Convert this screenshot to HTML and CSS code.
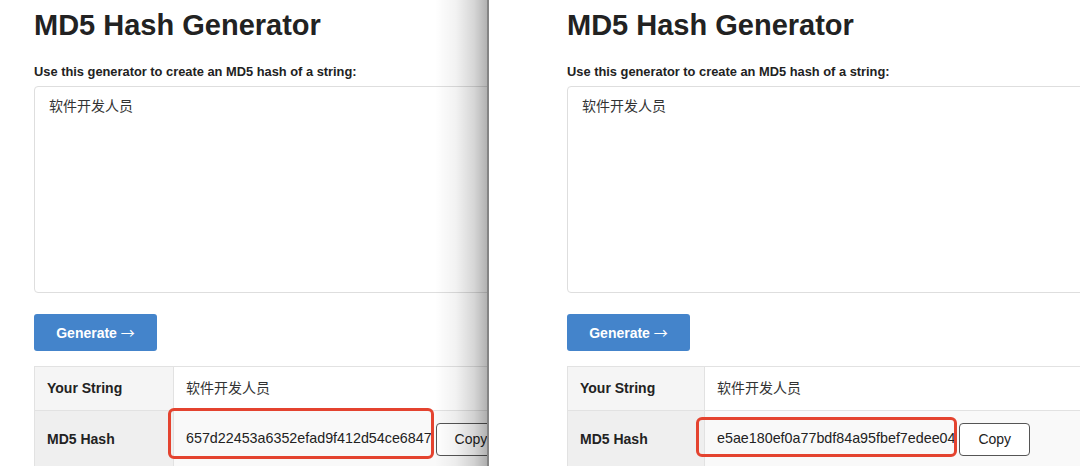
FILE: index.html
```html
<!DOCTYPE html>
<html lang="en">
<head>
<meta charset="utf-8">
<title>MD5 Hash Generator</title>
<link rel="stylesheet" href="styles.css">
</head>
<body>
<div class="shot">
  <section class="pane pane-left">
    <h1 class="title">MD5 Hash Generator</h1>
    <label class="lead" for="in-a">Use this generator to create an MD5 hash of a string:</label>
    <textarea id="in-a" class="input">软件开发人员</textarea>
    <button class="gen">Generate <span class="arrow">→</span></button>
    <table class="result">
      <tr class="row-a">
        <th>Your String</th>
        <td>软件开发人员</td>
      </tr>
      <tr class="row-b">
        <th>MD5 Hash</th>
        <td class="hash-cell"><span class="hash">657d22453a6352efad9f412d54ce6847</span> <button class="copy">Copy</button><span class="mark mark-a"></span></td>
      </tr>
    </table>
  </section>
  <section class="pane pane-right">
    <h1 class="title">MD5 Hash Generator</h1>
    <label class="lead" for="in-b">Use this generator to create an MD5 hash of a string:</label>
    <textarea id="in-b" class="input">软件开发人员</textarea>
    <button class="gen">Generate <span class="arrow">→</span></button>
    <table class="result result-b">
      <tr class="row-a">
        <th>Your String</th>
        <td>软件开发人员</td>
      </tr>
      <tr class="row-b">
        <th>MD5 Hash</th>
        <td class="hash-cell"><span class="hash">e5ae180ef0a77bdf84a95fbef7edee04</span> <button class="copy">Copy</button><span class="mark mark-b"></span></td>
      </tr>
    </table>
  </section>
</div>
</body>
</html>
```
FILE: styles.css
```css
html, body {
  margin: 0;
  padding: 0;
  background: #fff;
}
body {
  font-family: "Liberation Sans", "Noto Sans CJK SC", sans-serif;
  color: #222;
  width: 1080px;
  height: 466px;
  overflow: hidden;
}
.shot {
  display: flex;
  height: 466px;
  overflow: hidden;
}
.pane {
  box-sizing: border-box;
  height: 466px;
  overflow: hidden;
  padding-top: 8px;
  display: flex;
  flex-direction: column;
  align-items: flex-start;
}
.pane-left {
  width: 487px;
  flex: none;
  padding-left: 34px;
  position: relative;
}
.pane-left::after {
  content: "";
  position: absolute;
  top: 0;
  right: 0;
  bottom: 0;
  width: 52px;
  background: linear-gradient(to right, rgba(0,0,0,0) 0%, rgba(0,0,0,0.05) 40%, rgba(0,0,0,0.16) 75%, rgba(0,0,0,0.30) 100%);
  pointer-events: none;
}
.pane-right {
  flex: 1;
  border-left: 2px solid #858585;
  padding-left: 78px;
}
.title {
  margin: 0;
  font-size: 29px;
  line-height: 35px;
  font-weight: 700;
  color: #222;
  white-space: nowrap;
}
.lead {
  display: block;
  margin-top: 21px;
  font-size: 12.85px;
  line-height: 16px;
  font-weight: 700;
  color: #222;
  white-space: nowrap;
}
.input {
  display: block;
  box-sizing: border-box;
  flex: none;
  margin-top: 6px;
  width: 600px;
  height: 207px;
  padding: 9px 14px;
  border: 1px solid #dedede;
  border-radius: 4px;
  resize: none;
  font-family: "Liberation Sans", "Noto Sans CJK SC", sans-serif;
  font-size: 14px;
  line-height: 20px;
  color: #333;
  background: #fff;
  outline: none;
}
.gen {
  flex: none;
  margin-top: 21px;
  width: 123px;
  height: 37px;
  padding: 0;
  border: none;
  border-radius: 3px;
  background: #4484cb;
  color: #fff;
  font-family: "Liberation Sans", sans-serif;
  font-size: 14px;
  font-weight: 700;
  line-height: 17px;
  white-space: nowrap;
  text-align: center;
}
.arrow {
  font-family: "Noto Sans CJK SC", sans-serif;
  font-weight: 400;
  font-size: 14px;
}
.result {
  flex: none;
  margin-top: 15px;
  width: 600px;
  border-collapse: collapse;
  border: 1px solid #e2e2e2;
  font-size: 14px;
}
.result th,
.result td {
  padding: 12px 12px;
  text-align: left;
  vertical-align: middle;
  border: 1px solid #e2e2e2;
  line-height: 19px;
  white-space: nowrap;
}
.result th {
  width: 114px;
  font-weight: 700;
  color: #222;
}
.result-b th {
  width: 112px;
}
.result td {
  color: #333;
}
.row-a th { background: #f5f5f5; }
.row-a td { background: #fff; }
.row-b th { background: #efefef; }
.row-b td { background: #f9f9f9; }
.hash-cell {
  position: relative;
}
.hash {
  font-size: 14.3px;
  color: #222;
}
.copy {
  box-sizing: border-box;
  height: 33px;
  padding: 0 18px;
  border: 1px solid #555;
  border-radius: 4px;
  background: #fff;
  color: #222;
  font-family: "Liberation Sans", sans-serif;
  font-size: 14px;
  line-height: 17px;
  vertical-align: middle;
}
.mark {
  position: absolute;
  box-sizing: border-box;
  border: 3px solid #e4432f;
  border-radius: 6px;
  pointer-events: none;
}
.mark-a {
  left: -6px;
  top: -3px;
  width: 266px;
  height: 51px;
}
.mark-b {
  left: -9px;
  top: 6px;
  width: 261px;
  height: 40px;
}
```
